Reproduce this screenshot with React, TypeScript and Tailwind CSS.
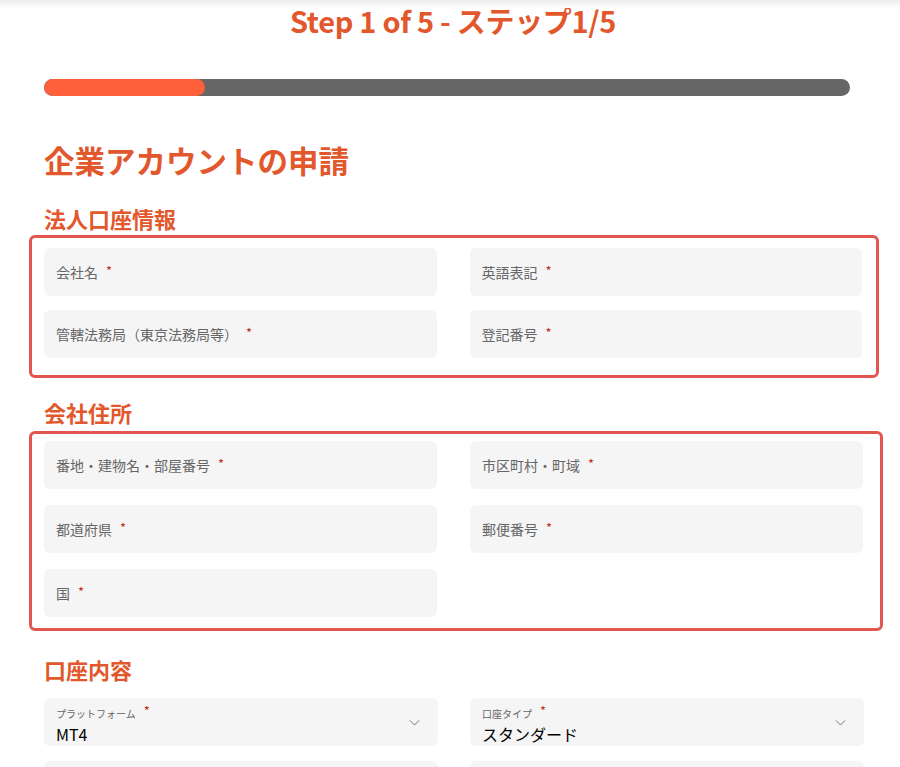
import React from "react";

const font = { fontFamily: '"Noto Sans CJK JP", "Noto Sans", sans-serif' };

const TextField = ({ label }: { label: string }) => {
  return (
    <div className="h-12 rounded-md bg-[#f5f5f5] flex items-center px-3">
      <span className="text-[14px] text-[#666666]">{label}</span>
      <span className="ml-2 text-[13px] text-[#c0301c] -mt-[3px]">*</span>
    </div>
  );
};

const SelectField = ({ label, value }: { label: string; value: string }) => {
  return (
    <div className="h-12 rounded-md bg-[#f5f5f5] flex items-center pl-3 pr-[16px]">
      <div className="flex-1 flex flex-col pt-[4px]">
        <div className="flex items-start leading-none">
          <span className="text-[10px] text-[#666666] mt-[3px]">{label}</span>
          <span className="ml-2 text-[13px] text-[#c0301c] -mt-[2px]">*</span>
        </div>
        <span className="text-[16px] text-black leading-none mt-[7px]">{value}</span>
      </div>
      <svg width="15" height="15" viewBox="0 0 24 24" fill="none" stroke="#777" strokeWidth="1.6" strokeLinecap="round" strokeLinejoin="round">
        <path d="M5 9l7 7 7-7" />
      </svg>
    </div>
  );
};

export default function App() {
  return (
    <div className="w-[900px] h-[767px] overflow-hidden bg-white relative" style={font}>
      <div className="absolute top-0 left-0 w-full h-2 bg-gradient-to-b from-[#ececec] to-white" />
      <div className="pt-[1px] text-center">
        <h1 className="text-[29px] font-bold text-[#e2582c] leading-[38px] tracking-[-0.3px] pl-[6px]">
          Step 1 of 5 - ステップ1/5
        </h1>
      </div>
      <div className="px-[44px] mt-[40px]">
        <div className="w-[806px] h-[17px] rounded-full bg-[#666666] overflow-hidden">
          <div className="w-[161px] h-full rounded-full bg-[#ff5f3a]" />
        </div>
      </div>

      <div className="px-[44px] mt-[44px]">
        <h2 className="text-[30.5px] font-bold text-[#e2582c] leading-[40px]">企業アカウントの申請</h2>
        <h3 className="mt-[23px] text-[22px] font-bold text-[#e2582c] leading-[30px]">法人口座情報</h3>
      </div>

      <div className="ml-[29px] mt-[2px] w-[850px] border-[3px] border-[#e25550] rounded-[6px] pl-[12px] pr-[14px] pt-[10px] pb-[17px]">
        <div className="grid grid-cols-2 gap-x-[33px] gap-y-[14px]">
          <TextField label="会社名" />
          <TextField label="英語表記" />
          <TextField label="管轄法務局（東京法務局等）" />
          <TextField label="登記番号" />
        </div>
      </div>

      <div className="px-[44px] mt-[19px]">
        <h3 className="text-[22px] font-bold text-[#e2582c] leading-[30px]">会社住所</h3>
      </div>

      <div className="ml-[29px] mt-[4px] w-[854px] border-[3px] border-[#e25550] rounded-[6px] pl-[12px] pr-[17px] pt-[7px] pb-[11px]">
        <div className="grid grid-cols-2 gap-x-[33px] gap-y-[16px]">
          <TextField label="番地・建物名・部屋番号" />
          <TextField label="市区町村・町域" />
          <TextField label="都道府県" />
          <TextField label="郵便番号" />
          <TextField label="国" />
        </div>
      </div>

      <div className="px-[44px] mt-[23px]">
        <h3 className="text-[22px] font-bold text-[#e2582c] leading-[30px]">口座内容</h3>
        <div className="mt-[14px] grid grid-cols-2 gap-x-[32px] gap-y-[15px] w-[820px]">
          <SelectField label="プラットフォーム" value="MT4" />
          <SelectField label="口座タイプ" value="スタンダード" />
          <div className="h-12 rounded-md bg-[#f5f5f5]" />
          <div className="h-12 rounded-md bg-[#f5f5f5]" />
        </div>
      </div>
    </div>
  );
}
